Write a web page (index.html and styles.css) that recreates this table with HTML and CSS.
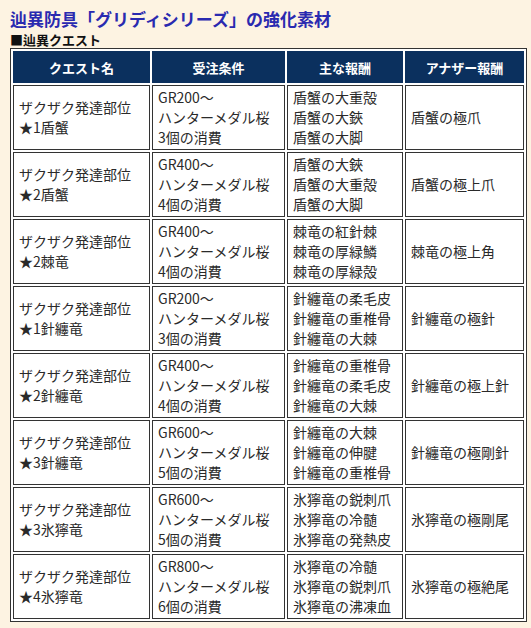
FILE: index.html
```html
<!DOCTYPE html>
<html lang="ja">
<head>
<meta charset="utf-8">
<link rel="stylesheet" href="styles.css">
</head>
<body>
<h1 class="title">辿異防具「グリディシリーズ」の強化素材</h1>
<h2 class="subtitle">■辿異クエスト</h2>
<table class="quest">
  <colgroup>
    <col class="c1"><col class="c2"><col class="c3"><col class="c4">
  </colgroup>
  <thead>
    <tr><th>クエスト名</th><th>受注条件</th><th>主な報酬</th><th>アナザー報酬</th></tr>
  </thead>
  <tbody>
    <tr>
      <td>ザクザク発達部位<br>★1盾蟹</td>
      <td>GR200～<br>ハンターメダル桜<br>3個の消費</td>
      <td>盾蟹の大重殻<br>盾蟹の大鋏<br>盾蟹の大脚</td>
      <td>盾蟹の極爪</td>
    </tr>
    <tr>
      <td>ザクザク発達部位<br>★2盾蟹</td>
      <td>GR400～<br>ハンターメダル桜<br>4個の消費</td>
      <td>盾蟹の大鋏<br>盾蟹の大重殻<br>盾蟹の大脚</td>
      <td>盾蟹の極上爪</td>
    </tr>
    <tr>
      <td>ザクザク発達部位<br>★2棘竜</td>
      <td>GR400～<br>ハンターメダル桜<br>4個の消費</td>
      <td>棘竜の紅針棘<br>棘竜の厚緑鱗<br>棘竜の厚緑殻</td>
      <td>棘竜の極上角</td>
    </tr>
    <tr>
      <td>ザクザク発達部位<br>★1針纏竜</td>
      <td>GR200～<br>ハンターメダル桜<br>3個の消費</td>
      <td>針纏竜の柔毛皮<br>針纏竜の重椎骨<br>針纏竜の大棘</td>
      <td>針纏竜の極針</td>
    </tr>
    <tr>
      <td>ザクザク発達部位<br>★2針纏竜</td>
      <td>GR400～<br>ハンターメダル桜<br>4個の消費</td>
      <td>針纏竜の重椎骨<br>針纏竜の柔毛皮<br>針纏竜の大棘</td>
      <td>針纏竜の極上針</td>
    </tr>
    <tr>
      <td>ザクザク発達部位<br>★3針纏竜</td>
      <td>GR600～<br>ハンターメダル桜<br>5個の消費</td>
      <td>針纏竜の大棘<br>針纏竜の伸腱<br>針纏竜の重椎骨</td>
      <td>針纏竜の極剛針</td>
    </tr>
    <tr>
      <td>ザクザク発達部位<br>★3氷獰竜</td>
      <td>GR600～<br>ハンターメダル桜<br>5個の消費</td>
      <td>氷獰竜の鋭刺爪<br>氷獰竜の冷髄<br>氷獰竜の発熱皮</td>
      <td>氷獰竜の極剛尾</td>
    </tr>
    <tr>
      <td>ザクザク発達部位<br>★4氷獰竜</td>
      <td>GR800～<br>ハンターメダル桜<br>6個の消費</td>
      <td>氷獰竜の冷髄<br>氷獰竜の鋭刺爪<br>氷獰竜の沸凍血</td>
      <td>氷獰竜の極絶尾</td>
    </tr>
  </tbody>
</table>
</body>
</html>
```
FILE: styles.css
```css
html, body {
  margin: 0;
  background: #fdf3e2;
}
body {
  padding: 6px 10px 10px 10px;
  font-family: "Noto Sans CJK JP", "Noto Sans", sans-serif;
  color: #222;
}
.title {
  margin: 0;
  font-size: 17px;
  line-height: 25px;
  font-weight: bold;
  color: #2a2ab0;
}
.subtitle {
  margin: 0;
  font-size: 13px;
  line-height: 17px;
  font-weight: bold;
  color: #111;
}
.quest {
  width: 511px;
  border: 1px solid #333;
  border-spacing: 2px;
  background: #ffffff;
  table-layout: fixed;
}
.c1 { width: 137px; }
.c2 { width: 133px; }
.c3 { width: 116px; }
.c4 { width: 119px; }
.quest th {
  background: #0b305e;
  color: #fff;
  font-size: 13px;
  font-weight: bold;
  height: 30px;
  padding: 0;
  border: 1px solid #0b305e;
  text-align: center;
}
.quest td {
  border: 1px solid #333;
  background: #fff;
  font-size: 14px;
  line-height: 20px;
  padding: 1px 5px 2px 5px;
  height: 60px;
  vertical-align: middle;
  text-align: left;
  color: #2a2a2a;
}
```
